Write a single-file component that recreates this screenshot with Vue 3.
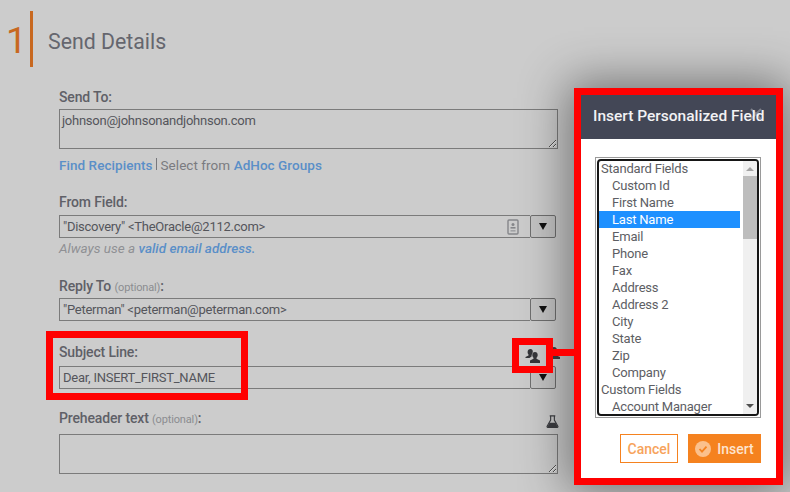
<script setup>
const fields = [
  { text: 'Standard Fields', group: true },
  { text: 'Custom Id' },
  { text: 'First Name' },
  { text: 'Last Name', selected: true },
  { text: 'Email' },
  { text: 'Phone' },
  { text: 'Fax' },
  { text: 'Address' },
  { text: 'Address 2' },
  { text: 'City' },
  { text: 'State' },
  { text: 'Zip' },
  { text: 'Company' },
  { text: 'Custom Fields', group: true },
  { text: 'Account Manager' }
]
</script>

<template>
  <div class="page">
    <div class="section_head">
      <span class="step">1</span>
      <span class="step_bar"></span>
      <h2>Send Details</h2>
    </div>

    <div class="form">
      <label class="first">Send To:</label>
      <textarea class="area" readonly>johnson@johnsonandjohnson.com</textarea>
      <p class="links"><a>Find Recipients</a><span class="sep"></span><span>Select from</span> <a>AdHoc Groups</a></p>

      <label class="from_label">From Field:</label>
      <div class="combo">
        <div class="input">
          <span>"Discovery" &lt;TheOracle@2112.com&gt;</span>
          <svg class="card_icon" viewBox="0 0 12 16" width="12" height="16">
            <rect x="1" y="1" width="10" height="14" rx="1" fill="none" stroke="#85868a" stroke-width="1.4" />
            <circle cx="6" cy="5.6" r="1.5" fill="#85868a" />
            <rect x="3.5" y="8" width="5" height="1.6" fill="#85868a" />
            <rect x="3.5" y="11" width="5" height="1.6" fill="#a0a1a4" />
          </svg>
        </div>
        <div class="drop"><i></i></div>
      </div>
      <p class="hint">Always use a <a>valid email address.</a></p>

      <label class="reply_label">Reply To <small>(optional)</small>:</label>
      <div class="combo">
        <div class="input"><span>"Peterman" &lt;peterman@peterman.com&gt;</span></div>
        <div class="drop"><i></i></div>
      </div>

      <label class="subject_label">Subject Line:</label>
      <div class="combo">
        <div class="input"><span>Dear, INSERT_FIRST_NAME</span></div>
        <div class="drop"><i></i></div>
      </div>

      <label class="pre_label">Preheader text <small>(optional)</small>:</label>
      <textarea class="area" readonly></textarea>
    </div>

    <!-- things on top of the form -->
    <svg class="people_icon" viewBox="0 0 16 14" width="16" height="14">
      <path d="M8 1c2 0 3 1.600 3 3.400 0 1.500-.7 2.700-1.500 3.300v1.300L14 11v2H2v-2l4.500-2V7.700C5.700 7.100 5 5.900 5 4.400 5 2.600 6 1 8 1z" fill="#3d3e42" />
    </svg>
    <svg class="flask" viewBox="0 0 14 14" width="13" height="13">
      <path d="M4 1h6M5 1v4.500L1.200 12.200c-.3.600 0 1.100.7 1.100h10.200c.7 0 1-.5.7-1.100L9 5.500V1" fill="none" stroke="#3d3e42" stroke-width="1.200" />
      <path d="M3.800 8.300h6.400l2.600 4.900H1.200z" fill="#3d3e42" />
    </svg>

    <div class="modal">
      <div class="modal_head">
        <span>Insert Personalized Field</span>
        <svg class="close" viewBox="0 0 12 12" width="12" height="12">
          <path d="M1 1l10 10M11 1L1 11" stroke="rgba(255, 255, 255, 0.3)" stroke-width="2" />
        </svg>
      </div>
      <div class="modal_body">
        <div class="list_outer">
          <div class="list">
            <div class="options">
              <div
                v-for="f in fields"
                :key="f.text"
                class="option"
                :class="{ group: f.group, selected: f.selected }"
              >{{ f.text }}</div>
            </div>
            <div class="scroll">
              <i class="arrow up"></i>
              <div class="thumb"></div>
              <i class="arrow down"></i>
            </div>
          </div>
        </div>
        <div class="actions">
          <button type="button" class="cancel">Cancel</button>
          <button type="button" class="insert">
            <svg viewBox="0 0 16 16" width="16" height="16">
              <circle cx="8" cy="8" r="8" fill="#fbc08c" />
              <path d="M4.500 8l2.500 2.700 4.500-5" fill="none" stroke="#f5821f" stroke-width="1.800" />
            </svg>
            Insert
          </button>
        </div>
      </div>
    </div>

    <div class="mark mark_subject"></div>
    <div class="mark mark_icon">
      <svg viewBox="0 0 16 14" width="16" height="14">
        <path d="M5.500 0C7 0 7.800 1.200 7.800 2.600c0 .6-.1 1.100-.4 1.600-.5.800-.8 1.500-.8 2.400v1L4.500 9H.5V8l3-1.500V5.500C2.900 5 2.600 3.900 2.600 2.900 2.600 1.300 3.800 0 5.500 0z" fill="#333438" />
        <path d="M10 3c1.700 0 2.700 1.300 2.700 3 0 1.200-.5 2.200-1.200 2.800v1l3.500 1.700V14H5v-2.500l3.500-1.700v-1C7.800 8.200 7.300 7.200 7.300 6 7.300 4.300 8.300 3 10 3z" fill="#333438" />
      </svg>
    </div>
    <div class="mark_line"></div>
  </div>
</template>

<style scoped>
.page {
  position: relative;
  width: 790px;
  height: 492px;
  overflow: hidden;
  background: #cccccc;
  font-family: Roboto, "Liberation Sans", sans-serif;
  color: #5f6067;
  font-size: 13px;
}

.section_head {
  display: flex;
  align-items: center;
  height: 56px;
  padding: 11px 0 0 6px;
}

.step {
  width: 24px;
  padding-top: 3px;
  font-size: 37px;
  font-weight: 400;
  color: #c8681f;
}

.step_bar {
  width: 3px;
  height: 56px;
  background: #c8681f;
}

h2 {
  margin: 4px 0 0 15px;
  font-size: 21.300px;
  font-weight: 400;
  color: #65666e;
}

.form {
  width: 499px;
  margin-left: 59px;
}

label {
  display: block;
  font-size: 14px;
  font-weight: 500;
  line-height: 16px;
  letter-spacing: -0.15px;
  color: #5f6067;
}

label small {
  font-size: 11px;
  font-weight: 400;
  color: #8b8c90;
}

.first { margin-top: 22px; margin-bottom: 4px; }
.from_label { margin-top: 21px; margin-bottom: 5px; }
.reply_label { margin-top: 22px; margin-bottom: 2px; }
.subject_label { margin-top: 23px; margin-bottom: 6px; }
.pre_label { margin-top: 21px; margin-bottom: 6px; }

.area {
  display: block;
  box-sizing: border-box;
  width: 499px;
  height: 40px;
  margin: 0;
  padding: 3px 2px;
  background: transparent;
  border: 1px solid #7b7b7b;
  border-radius: 0;
  outline: none;
  font-family: inherit;
  font-size: 13px;
  letter-spacing: -0.25px;
  color: #54555b;
}

.links {
  margin: 8px 0 0;
  font-size: 13.500px;
  line-height: 16px;
  letter-spacing: 0.05px;
  color: #7a7b80;
}

a {
  color: #5a8fc8;
  font-weight: 500;
}

.sep {
  display: inline-block;
  width: 1px;
  height: 12px;
  margin: 0 4px 0 3px;
  background: #77787c;
}

.combo {
  display: flex;
  width: 497px;
  height: 23px;
}

.input {
  box-sizing: border-box;
  flex: 1;
  display: flex;
  align-items: center;
  justify-content: space-between;
  padding: 0 4px 0 3px;
  border: 1px solid #7b7b7b;
  border-right: none;
  font-size: 13px;
  letter-spacing: -0.25px;
  color: #54555b;
}

.card_icon {
  margin-right: 7px;
}

.drop {
  box-sizing: border-box;
  width: 26px;
  display: flex;
  align-items: center;
  justify-content: center;
  border: 1px solid #6f6f6f;
  border-radius: 2px;
  background: #c4c4c4;
}

.drop i {
  width: 0;
  height: 0;
  border-left: 4px solid transparent;
  border-right: 4px solid transparent;
  border-top: 7px solid #111;
}

.hint {
  margin: 2px 0 0;
  font-size: 13.500px;
  line-height: 16px;
  font-style: italic;
  color: #8f9094;
}

.people_icon {
  position: absolute;
  left: 546px;
  top: 346px;
}

.flask {
  position: absolute;
  left: 546px;
  top: 415px;
}

.mark {
  position: absolute;
  box-sizing: border-box;
  border: 7px solid #ff0000;
}

.mark_subject {
  left: 46px;
  top: 331px;
  width: 202px;
  height: 69px;
}

.mark_icon {
  left: 512px;
  top: 338px;
  width: 41px;
  height: 35px;
  display: flex;
  align-items: center;
  justify-content: center;
}

.mark_line {
  position: absolute;
  left: 553px;
  top: 349px;
  width: 22px;
  height: 7px;
  background: #ff0000;
}

.modal {
  position: absolute;
  left: 574px;
  top: 88px;
  box-sizing: border-box;
  width: 209px;
  height: 397px;
  border: 7px solid #ff0000;
  background: #fff;
  box-shadow: 0 0 45px 6px rgba(0, 0, 0, 0.45);
}

.modal_head {
  position: relative;
  height: 44px;
  display: flex;
  align-items: center;
  padding: 0 0 2px 12px;
  box-sizing: border-box;
  background: #434756;
  color: #f2f2f4;
  font-size: 15.500px;
  font-weight: 500;
  white-space: nowrap;
}

.close {
  position: absolute;
  left: 169px;
  top: 13px;
}

.modal_body {
  padding: 18px 15px 0 14px;
}

.list_outer {
  box-sizing: border-box;
  width: 166px;
  height: 261px;
  padding: 1px;
  border: 1px solid #9a9a9a;
}

.list {
  box-sizing: border-box;
  display: flex;
  height: 100%;
  overflow: hidden;
  border: 2px solid #161616;
  border-radius: 4px;
}

.options {
  flex: 1;
  overflow: hidden;
  margin-top: -1px;
}

.option {
  height: 17px;
  line-height: 17px;
  padding-left: 13px;
  font-size: 13px;
  letter-spacing: -0.2px;
  color: #5d5e64;
  white-space: nowrap;
}

.option.group {
  padding-left: 2px;
}

.option.selected {
  background: #1e90ff;
  color: #fff;
}

.scroll {
  position: relative;
  width: 14px;
  margin-left: 3px;
  background: #f0f0f0;
}

.thumb {
  position: absolute;
  left: 0;
  top: 15px;
  width: 14px;
  height: 63px;
  background: #bdbdbd;
}

.arrow {
  position: absolute;
  left: 3px;
  width: 0;
  height: 0;
  border-left: 4px solid transparent;
  border-right: 4px solid transparent;
}

.arrow.up {
  top: 6px;
  border-bottom: 4px solid #a3a3a3;
}

.arrow.down {
  bottom: 6px;
  border-top: 4px solid #505050;
}

.actions {
  display: flex;
  justify-content: flex-end;
  gap: 10px;
  margin-top: 16px;
  width: 166px;
}

.actions button {
  box-sizing: border-box;
  height: 29px;
  font-family: inherit;
  font-size: 14px;
  font-weight: 500;
  border-radius: 0;
}

.cancel {
  width: 58px;
  padding: 0;
  background: #fff;
  border: 1px solid #f5821f;
  color: #f7a35c;
}

.insert {
  width: 73px;
  display: flex;
  align-items: center;
  justify-content: center;
  gap: 6px;
  padding: 0;
  background: #f5821f;
  border: none;
  color: #fde4cf;
}
</style>
